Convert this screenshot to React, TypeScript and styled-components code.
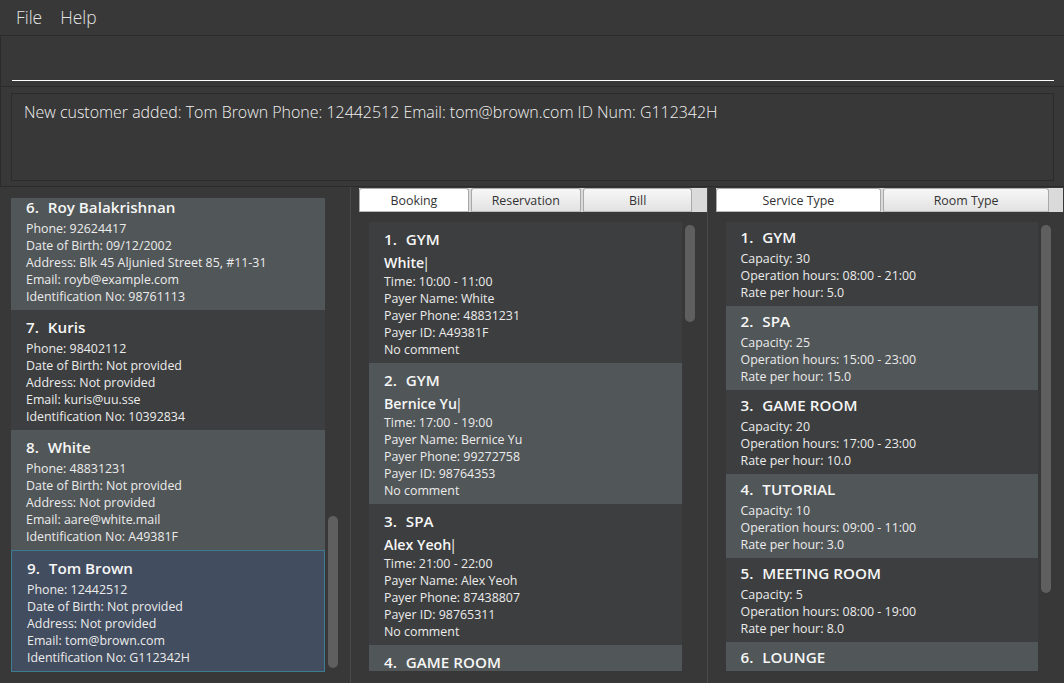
import React from "react";
import styled, { createGlobalStyle, css } from "styled-components";

const GlobalStyle = createGlobalStyle`
  html, body { margin: 0; padding: 0; background: #383838; }
  body { font-family: "Open Sans", "Noto Sans", sans-serif; }
  * { box-sizing: border-box; }
`;

const Window = styled.div`
  width: 1064px;
  height: 683px;
  background: #383838;
  display: flex;
  flex-direction: column;
  overflow: hidden;
  font-family: "Open Sans", "Noto Sans", sans-serif;
`;

const MenuBar = styled.div`
  height: 35px;
  display: flex;
  align-items: center;
  padding-left: 7px;
  flex-shrink: 0;
`;

const MenuItem = styled.span`
  padding: 0 9px;
  font-size: 17.4px;
  font-weight: 300;
  color: #e4e4e4;
  line-height: 35px;
`;

const CommandPane = styled.div`
  height: 51px;
  flex-shrink: 0;
  border-top: 1px solid #2b2b2b;
  border-left: 1px solid #2b2b2b;
  padding: 5px 10px 5px 11px;
`;

const CommandInput = styled.div`
  height: 40px;
  border-bottom: 1px solid #ffffff;
`;

const ResultPane = styled.div`
  height: 100px;
  flex-shrink: 0;
  border-top: 1px solid #2b2b2b;
  border-left: 1px solid #2b2b2b;
  padding: 6px 10px 5px 10px;
`;

const ResultBox = styled.div`
  height: 88px;
  border: 1px solid #2b2b2b;
  padding: 7px 12px;
  font-size: 15.95px;
  font-weight: 300;
  line-height: 23px;
  color: #f2f2f2;
`;

const SplitArea = styled.div`
  flex: 1;
  display: flex;
  border-top: 1px solid #2b2b2b;
  min-height: 0;
`;

const Divider = styled.div`
  width: 1px;
  background: #4a4a4a;
  flex-shrink: 0;
`;

const LeftPanel = styled.div`
  width: 350px;
  flex-shrink: 0;
  padding: 10px;
  display: flex;
`;

const ListView = styled.div<{ $inset?: boolean }>`
  flex: 1;
  display: flex;
  min-height: 0;
  padding: ${(p) => (p.$inset ? "1px" : "0")};
`;

const Viewport = styled.div<{ $end?: boolean }>`
  flex: 1;
  display: flex;
  flex-direction: column;
  justify-content: ${(p) => (p.$end ? "flex-end" : "flex-start")};
  overflow: hidden;
  min-height: 0;
`;

const ScrollTrack = styled.div`
  width: 14px;
  flex-shrink: 0;
  padding: 3px 1px 3px 3px;
  display: flex;
  flex-direction: column;
`;

const Thumb = styled.div`
  width: 10px;
  background: #5f5f5f;
  border-radius: 5px;
  flex-shrink: 0;
`;

const TabPanel = styled.div<{ $right?: boolean }>`
  flex: 1;
  display: flex;
  flex-direction: column;
  padding: ${(p) => (p.$right ? "1px 1px 12px 8px" : "1px 0 12px 8px")};
  min-width: 0;
`;

const TabHeader = styled.div`
  height: 24px;
  display: flex;
  gap: 2px;
  background: #dadada;
  flex-shrink: 0;
`;

const Tab = styled.div<{ $selected?: boolean }>`
  flex: 1;
  display: flex;
  align-items: center;
  justify-content: center;
  border: 1px solid #a9a9a9;
  border-bottom-color: #b9b9b9;
  border-radius: 3px 3px 0 0;
  font-size: 12.4px;
  color: #333333;
  ${(p) =>
    p.$selected
      ? css`
          background: #ffffff;
        `
      : css`
          background: linear-gradient(#f7f7f7, #e2e2e2);
        `}
`;

const TabFiller = styled.div`
  width: 12px;
  flex-shrink: 0;
`;

const TabContent = styled.div`
  flex: 1;
  display: flex;
  padding: 10px 11px 0 10px;
  min-height: 0;
`;

const Card = styled.div<{ $odd?: boolean; $selected?: boolean }>`
  flex-shrink: 0;
  display: flex;
  flex-direction: column;
  padding: 6px 10px 5px 15px;
  background: ${(p) => (p.$selected ? "#424d5f" : p.$odd ? "#515658" : "#3c3e3f")};
  ${(p) =>
    p.$selected &&
    css`
      border: 1px solid #3e7b91;
    `}
`;

const ServiceCardBox = styled(Card)`
  padding-top: 4px;
`;

const TitleRow = styled.div`
  display: flex;
  gap: 5px;
  font-size: 15.2px;
  font-weight: 600;
  line-height: 22px;
  color: #f6f6f6;
  margin-bottom: 2px;
  white-space: pre;
`;

const NameLine = styled.div`
  font-size: 14.2px;
  font-weight: 600;
  line-height: 20px;
  color: #f6f6f6;
  margin-top: 1px;
`;

const Cursor = styled.span`
  margin-left: -2px;
  font-weight: 400;
`;

const Line = styled.div`
  font-size: 12.4px;
  line-height: 17px;
  color: #ececec;
  white-space: nowrap;
`;

type Person = {
  n: number;
  name: string;
  phone: string;
  dob: string;
  address: string;
  email: string;
  id: string;
};

const persons: Person[] = [
  { n: 6, name: "Roy Balakrishnan", phone: "92624417", dob: "09/12/2002", address: "Blk 45 Aljunied Street 85, #11-31", email: "royb@example.com", id: "98761113" },
  { n: 7, name: "Kuris", phone: "98402112", dob: "Not provided", address: "Not provided", email: "kuris@uu.sse", id: "10392834" },
  { n: 8, name: "White", phone: "48831231", dob: "Not provided", address: "Not provided", email: "aare@white.mail", id: "A49381F" },
  { n: 9, name: "Tom Brown", phone: "12442512", dob: "Not provided", address: "Not provided", email: "tom@brown.com", id: "G112342H" },
];

type Booking = {
  n: number;
  room: string;
  name: string;
  time: string;
  payer: string;
  phone: string;
  id: string;
};

const bookings: Booking[] = [
  { n: 1, room: "GYM", name: "White", time: "10:00 - 11:00", payer: "White", phone: "48831231", id: "A49381F" },
  { n: 2, room: "GYM", name: "Bernice Yu", time: "17:00 - 19:00", payer: "Bernice Yu", phone: "99272758", id: "98764353" },
  { n: 3, room: "SPA", name: "Alex Yeoh", time: "21:00 - 22:00", payer: "Alex Yeoh", phone: "87438807", id: "98765311" },
  { n: 4, room: "GAME ROOM", name: "Charlotte Oliveiro", time: "12:00 - 13:00", payer: "Charlotte Oliveiro", phone: "93210283", id: "98765432" },
];

type Service = { n: number; name: string; cap: number; hours: string; rate: string };

const services: Service[] = [
  { n: 1, name: "GYM", cap: 30, hours: "08:00 - 21:00", rate: "5.0" },
  { n: 2, name: "SPA", cap: 25, hours: "15:00 - 23:00", rate: "15.0" },
  { n: 3, name: "GAME ROOM", cap: 20, hours: "17:00 - 23:00", rate: "10.0" },
  { n: 4, name: "TUTORIAL", cap: 10, hours: "09:00 - 11:00", rate: "3.0" },
  { n: 5, name: "MEETING ROOM", cap: 5, hours: "08:00 - 19:00", rate: "8.0" },
  { n: 6, name: "LOUNGE", cap: 15, hours: "10:00 - 22:00", rate: "2.0" },
];

const Scrollbar = ({ offset, size }: { offset: number; size: number }) => (
  <ScrollTrack>
    <Thumb style={{ marginTop: offset, height: size }} />
  </ScrollTrack>
);

export default function App() {
  return (
    <>
      <GlobalStyle />
      <Window>
        <MenuBar>
          <MenuItem>File</MenuItem>
          <MenuItem>Help</MenuItem>
        </MenuBar>
        <CommandPane>
          <CommandInput />
        </CommandPane>
        <ResultPane>
          <ResultBox>
            New customer added: Tom Brown Phone: 12442512 Email: tom@brown.com ID Num: G112342H
          </ResultBox>
        </ResultPane>
        <SplitArea>
          <LeftPanel>
            <ListView $inset>
              <Viewport $end>
                {persons.map((p) => (
                  <Card key={p.n} $odd={p.n % 2 === 0} $selected={p.n === 9}>
                    <TitleRow>
                      <span>{p.n}. </span>
                      <span>{p.name}</span>
                    </TitleRow>
                    <Line>Phone: {p.phone}</Line>
                    <Line>Date of Birth: {p.dob}</Line>
                    <Line>Address: {p.address}</Line>
                    <Line>Email: {p.email}</Line>
                    <Line>Identification No: {p.id}</Line>
                  </Card>
                ))}
              </Viewport>
              <Scrollbar offset={315} size={152} />
            </ListView>
          </LeftPanel>
          <Divider />
          <TabPanel>
            <TabHeader>
              <Tab $selected>Booking</Tab>
              <Tab>Reservation</Tab>
              <Tab>Bill</Tab>
              <TabFiller />
            </TabHeader>
            <TabContent>
              <ListView>
                <Viewport>
                  {bookings.map((b, i) => (
                    <Card key={b.n} $odd={i % 2 === 1}>
                      <TitleRow>
                        <span>{b.n}. </span>
                        <span>{b.room}</span>
                      </TitleRow>
                      <NameLine>
                        {b.name}
                        <Cursor>|</Cursor>
                      </NameLine>
                      <Line>Time: {b.time}</Line>
                      <Line>Payer Name: {b.payer}</Line>
                      <Line>Payer Phone: {b.phone}</Line>
                      <Line>Payer ID: {b.id}</Line>
                      <Line>No comment</Line>
                    </Card>
                  ))}
                </Viewport>
                <Scrollbar offset={0} size={97} />
              </ListView>
            </TabContent>
          </TabPanel>
          <Divider />
          <TabPanel $right>
            <TabHeader>
              <Tab $selected>Service Type</Tab>
              <Tab>Room Type</Tab>
              <TabFiller />
            </TabHeader>
            <TabContent>
              <ListView>
                <Viewport>
                  {services.map((s, i) => (
                    <ServiceCardBox key={s.n} $odd={i % 2 === 1}>
                      <TitleRow>
                        <span>{s.n}. </span>
                        <span>{s.name}</span>
                      </TitleRow>
                      <Line>Capacity: {s.cap}</Line>
                      <Line>Operation hours: {s.hours}</Line>
                      <Line>Rate per hour: {s.rate}</Line>
                    </ServiceCardBox>
                  ))}
                </Viewport>
                <Scrollbar offset={0} size={368} />
              </ListView>
            </TabContent>
          </TabPanel>
        </SplitArea>
      </Window>
    </>
  );
}
